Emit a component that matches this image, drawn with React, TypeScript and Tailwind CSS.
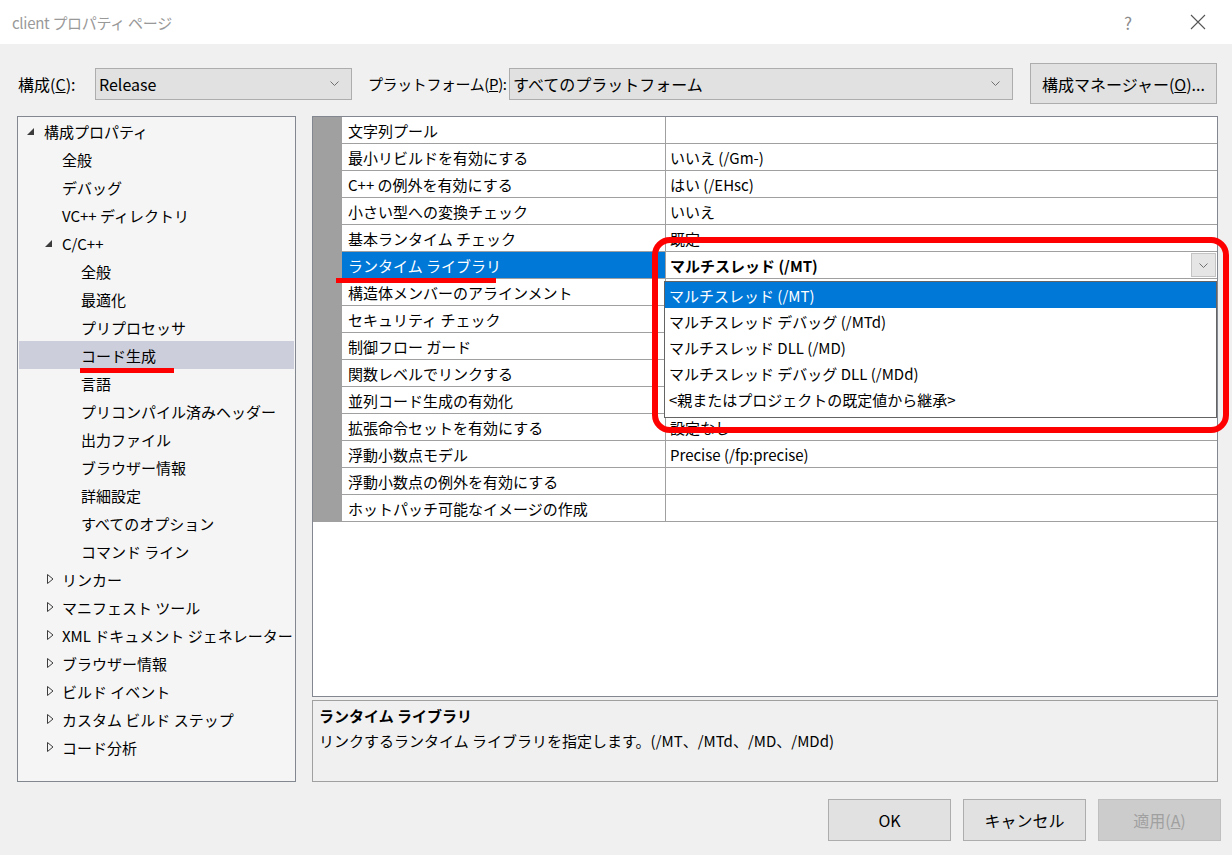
import React from "react";

type TreeItem = {
  label: string;
  level: number;
  state?: "open" | "closed";
  selected?: boolean;
};

const tree: TreeItem[] = [
  { label: "構成プロパティ", level: 0, state: "open" },
  { label: "全般", level: 1 },
  { label: "デバッグ", level: 1 },
  { label: "VC++ ディレクトリ", level: 1 },
  { label: "C/C++", level: 1, state: "open" },
  { label: "全般", level: 2 },
  { label: "最適化", level: 2 },
  { label: "プリプロセッサ", level: 2 },
  { label: "コード生成", level: 2, selected: true },
  { label: "言語", level: 2 },
  { label: "プリコンパイル済みヘッダー", level: 2 },
  { label: "出力ファイル", level: 2 },
  { label: "ブラウザー情報", level: 2 },
  { label: "詳細設定", level: 2 },
  { label: "すべてのオプション", level: 2 },
  { label: "コマンド ライン", level: 2 },
  { label: "リンカー", level: 1, state: "closed" },
  { label: "マニフェスト ツール", level: 1, state: "closed" },
  { label: "XML ドキュメント ジェネレーター", level: 1, state: "closed" },
  { label: "ブラウザー情報", level: 1, state: "closed" },
  { label: "ビルド イベント", level: 1, state: "closed" },
  { label: "カスタム ビルド ステップ", level: 1, state: "closed" },
  { label: "コード分析", level: 1, state: "closed" },
];

// values under the open dropdown are hidden in the picture, so left blank
const props: [string, string][] = [
  ["文字列プール", ""],
  ["最小リビルドを有効にする", "いいえ (/Gm-)"],
  ["C++ の例外を有効にする", "はい (/EHsc)"],
  ["小さい型への変換チェック", "いいえ"],
  ["基本ランタイム チェック", "既定"],
  ["ランタイム ライブラリ", "マルチスレッド (/MT)"],
  ["構造体メンバーのアラインメント", ""],
  ["セキュリティ チェック", ""],
  ["制御フロー ガード", ""],
  ["関数レベルでリンクする", ""],
  ["並列コード生成の有効化", ""],
  ["拡張命令セットを有効にする", "設定なし"],
  ["浮動小数点モデル", "Precise (/fp:precise)"],
  ["浮動小数点の例外を有効にする", ""],
  ["ホットパッチ可能なイメージの作成", ""],
];

const options = [
  "マルチスレッド (/MT)",
  "マルチスレッド デバッグ (/MTd)",
  "マルチスレッド DLL (/MD)",
  "マルチスレッド デバッグ DLL (/MDd)",
  "<親またはプロジェクトの既定値から継承>",
];

function Chevron() {
  return (
    <svg width="9" height="5" viewBox="0 0 9 5" className="shrink-0">
      <polyline points="0.5,0.5 4.5,4.5 8.5,0.5" fill="none" stroke="#707070" strokeWidth="1" />
    </svg>
  );
}

function Select({ value, width }: { value: string; width: string }) {
  return (
    <div className={`${width} flex h-[32px] shrink-0 items-center justify-between border border-[#adadad] bg-[#e1e1e1] pl-[3px] pr-[12px] text-[16px]`}>
      <span>{value}</span>
      <Chevron />
    </div>
  );
}

function TreeRow({ item }: { item: TreeItem }) {
  const pad = item.level === 0 ? "pl-[8px]" : item.level === 1 ? "pl-[26px]" : "pl-[45px]";
  return (
    <div className={`mx-[1px] flex h-[28px] items-center ${pad} ${item.selected ? "bg-[#cccedb]" : ""}`}>
      <div className="flex w-[17px] shrink-0 items-center">
        {item.state === "open" && (
          <svg width="7" height="7" viewBox="0 0 7 7">
            <polygon points="7,0 7,7 0,7" fill="#3c3c3c" />
          </svg>
        )}
        {item.state === "closed" && (
          <svg width="7" height="10" viewBox="0 0 7 10" className="ml-[2px]">
            <polygon points="0.5,0.5 6,5 0.5,9.5" fill="none" stroke="#3c3c3c" strokeWidth="1" />
          </svg>
        )}
      </div>
      <span className="whitespace-nowrap">{item.label}</span>
    </div>
  );
}

function Button({ children, disabled }: { children: React.ReactNode; disabled?: boolean }) {
  return (
    <div
      className={`flex h-[42px] w-[123px] items-center justify-center border text-[16px] ${
        disabled ? "border-[#bfbfbf] bg-[#cccccc] text-[#a0a0a0]" : "border-[#adadad] bg-[#e1e1e1] text-black"
      }`}
    >
      {children}
    </div>
  );
}

export default function App() {
  return (
    <div className="relative h-[855px] w-[1232px] overflow-hidden bg-[#f0f0f0] font-['Noto_Sans_CJK_JP','Noto_Sans',sans-serif] leading-none text-black">
      {/* title bar */}
      <div className="flex h-[44px] items-center bg-white pl-[12px] pr-[26px]">
        <span className="text-[15px] tracking-[-0.3px] text-[#999999]">client プロパティ ページ</span>
        <span className="ml-auto text-[17px] text-[#8c8c8c]">?</span>
        <svg width="16" height="16" viewBox="0 0 16 16" className="ml-[58px]">
          <path d="M1 1 L15 15 M15 1 L1 15" stroke="#555" strokeWidth="1.1" />
        </svg>
      </div>

      {/* config row */}
      <div className="mt-[19px] flex h-[41px] items-center pl-[18px]">
        <span className="w-[77px] shrink-0 whitespace-nowrap text-[16px]">
          構成(<span className="underline">C</span>):
        </span>
        <Select value="Release" width="w-[257px]" />
        <span className="ml-[16px] w-[141px] shrink-0 whitespace-nowrap text-[15px] tracking-[-0.4px]">
          プラットフォーム(<span className="underline">P</span>):
        </span>
        <Select value="すべてのプラットフォーム" width="w-[504px]" />
        <div className="ml-[17px] flex h-[41px] w-[187px] shrink-0 items-center justify-center border border-[#adadad] bg-[#e1e1e1] text-[16px]">
          構成マネージャー(<span className="underline">O</span>)...
        </div>
      </div>

      {/* main area */}
      <div className="mt-[12px] flex gap-[16px] pl-[17px]">
        <div className="h-[666px] w-[279px] border border-[#828790] bg-[#f5f5f5] text-[15px]">
          {tree.map((t, i) => (
            <TreeRow key={i} item={t} />
          ))}
        </div>

        <div className="flex w-[906px] flex-col gap-[3px]">
          <div className="h-[581px] border border-[#828790] bg-white text-[15px]">
            {props.map(([name, value], i) => {
              const sel = i === 5;
              return (
                <div key={i} className="flex h-[27px]">
                  <div className="w-[29px] shrink-0 bg-[#a0a0a0]" />
                  <div
                    className={`flex w-[324px] shrink-0 items-center border-r border-b border-[#a0a0a0] pl-[6px] whitespace-nowrap ${
                      sel ? "bg-[#0078d7] text-white" : ""
                    }`}
                  >
                    {name}
                  </div>
                  <div className="flex flex-1 items-center border-b border-[#a0a0a0] pl-[4px] whitespace-nowrap">
                    {sel ? (
                      <>
                        <span className="font-bold">{value}</span>
                        <div className="mr-[1px] ml-auto flex h-[24px] w-[25px] items-center justify-center border border-[#c3c3c3] bg-[#e5e5e5]">
                          <Chevron />
                        </div>
                      </>
                    ) : (
                      value
                    )}
                  </div>
                </div>
              );
            })}
          </div>

          <div className="h-[82px] border border-[#a0a0a0] bg-[#f0f0f0] pt-[7px] pl-[6px] text-[15px]">
            <div className="font-bold">ランタイム ライブラリ</div>
            <div className="mt-[10px]">リンクするランタイム ライブラリを指定します。(/MT、/MTd、/MD、/MDd)</div>
          </div>
        </div>
      </div>

      {/* buttons */}
      <div className="mt-[17px] flex justify-end gap-[12px] pr-[11px]">
        <Button>OK</Button>
        <Button>キャンセル</Button>
        <Button disabled>
          適用(<span className="underline">A</span>)
        </Button>
      </div>

      {/* open dropdown list */}
      <div className="absolute top-[281px] left-[664px] h-[137px] w-[553px] border border-[#646464] bg-white text-[15px]">
        {options.map((o, i) => (
          <div
            key={i}
            className={`flex h-[26px] items-center pl-[4px] whitespace-nowrap ${i === 0 ? "bg-[#0078d7] text-white" : ""}`}
          >
            {o}
          </div>
        ))}
      </div>

      {/* annotations */}
      <div className="absolute top-[237px] left-[652px] h-[196px] w-[577px] rounded-[18px] border-[6px] border-[#ff0000]" />
      <div className="absolute top-[278px] left-[336px] h-[5px] w-[160px] bg-[#ff0000]" />
      <div className="absolute top-[368px] left-[80px] h-[5px] w-[94px] bg-[#ff0000]" />
    </div>
  );
}
